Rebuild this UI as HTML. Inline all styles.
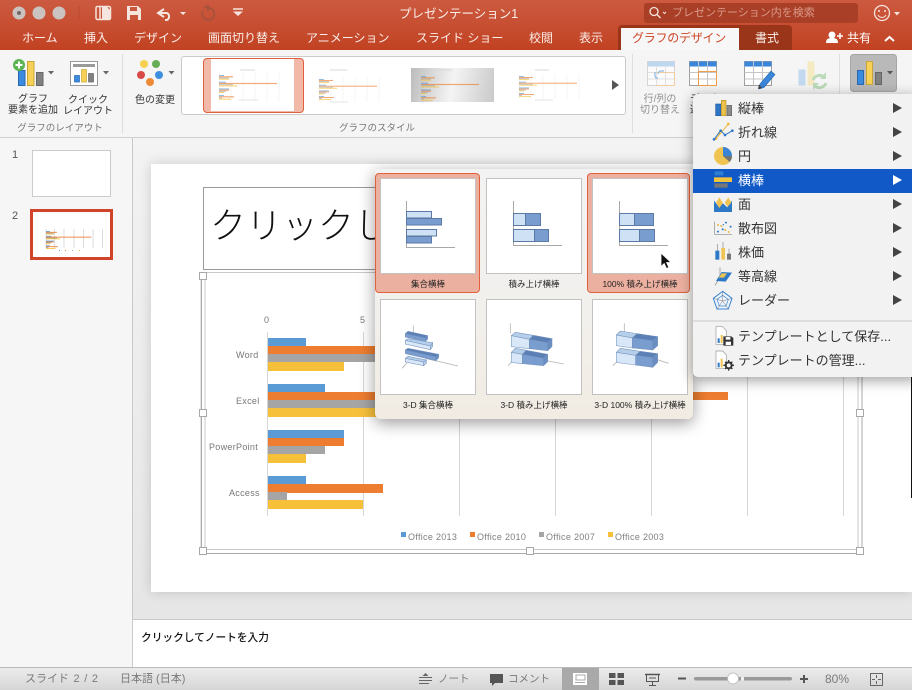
<!DOCTYPE html>
<html lang="ja"><head><meta charset="utf-8"><title>プレゼンテーション1</title>
<style>
html,body{margin:0;padding:0}
body{position:relative;width:912px;height:690px;overflow:hidden;background:#e6e6e6;font-family:"Liberation Sans","Noto Sans CJK JP",sans-serif;color:#333}
.a{position:absolute}
.t{position:absolute;white-space:nowrap;line-height:1}
.c{transform:translateX(-50%)}
.s{position:absolute;left:0;top:0;width:912px;height:690px;overflow:visible}
.tab{color:#fbeee9;font-size:12px;top:32px}
.rl{font-size:10px;color:#333}
.gl{font-size:9.5px;color:#777;top:124px}
.dim{font-size:10px;color:#8f8f8f}
.ax{font-size:9px;color:#777;letter-spacing:.3px}
.lg{font-size:9px;color:#808080;letter-spacing:.3px;top:533px}
.pl{font-size:8.5px;color:#222}
.m{font-size:13px;color:#333;left:738px}
.st{font-size:11px;color:#7a7a7a;top:674px}
</style></head><body>

<!-- title + tabs -->
<div class="a" style="left:0;top:0;width:912px;height:50px;background:linear-gradient(#cc5a40,#c64c2f 60%,#c14222)"></div>
<div class="a" style="left:0;top:50px;width:912px;height:87px;background:#f5f5f5;border-bottom:1px solid #cfcfcf"></div>
<div class="a" style="left:644px;top:3px;width:214px;height:20px;border-radius:3px;background:#a93f27"></div>
<div class="a" style="left:618px;top:25px;width:174px;height:25px;border-radius:4px 4px 0 0;background:#9a3519"></div>
<div class="a" style="left:621px;top:28px;width:118px;height:22px;background:#f7f7f7"></div>

<svg class="s" viewBox="0 0 912 690">
 <circle cx="19" cy="13" r="6.5" fill="#cbc3bf"/><circle cx="19" cy="13" r="2" fill="#6f6a68"/>
 <circle cx="39" cy="13" r="6.5" fill="#cbc3bf"/><circle cx="59" cy="13" r="6.5" fill="#cbc3bf"/>
 <path d="M79 6v14" stroke="#b9492e"/>
 <rect x="96" y="6.5" width="14.500" height="13" rx="1.500" fill="none" stroke="#f6e5df" stroke-width="1.500"/><path d="M100 7v12" stroke="#f6e5df" stroke-width="1.500"/><path d="M102 7h5l4 4v8h-9z" fill="#f6e5df"/>
 <path d="M127 6h11l3 3v11h-14z" fill="#f6e5df"/><rect x="130" y="7" width="7" height="4" fill="#c9553a"/><rect x="130" y="15" width="8" height="5" fill="#c9553a"/>
 <path d="M164 9l-6 4 6 4M158 13h9a4 4 0 0 1 0 7h-2" fill="none" stroke="#f6e5df" stroke-width="2"/>
 <path d="M180 12h6l-3 3z" fill="#f6e5df"/>
 <path d="M204 8l4-2v5M207 8a6 6 0 1 1-4 3" fill="none" stroke="#a8523c" stroke-width="2"/>
 <path d="M233 9h10" stroke="#f6e5df" stroke-width="1.500"/><path d="M233 11.500h10l-5 4.500z" fill="#f6e5df"/>
 <circle cx="654" cy="11.500" r="4" fill="none" stroke="#f6e5df" stroke-width="1.300"/><path d="M657 14.500l3.500 3.500" stroke="#f6e5df" stroke-width="1.300"/><path d="M663 12l1.500 1.500 1.500-1.500" fill="none" stroke="#f6e5df"/>
 <circle cx="882" cy="13" r="7.500" fill="none" stroke="#f6e5df" stroke-width="1.300"/><circle cx="879" cy="11" r="1" fill="#f6e5df"/><circle cx="885" cy="11" r="1" fill="#f6e5df"/><path d="M878 15a4.500 4.500 0 0 0 8 0" fill="none" stroke="#f6e5df"/>
 <path d="M894 12h6l-3 3.500z" fill="#f6e5df"/>
 <circle cx="832" cy="35" r="3.500" fill="#fff"/><path d="M826 43c0-4 2-5 6-5s6 1 6 5z" fill="#fff"/><path d="M840 33v6M837 36h6" stroke="#fff" stroke-width="1.500"/>
 <path d="M885 41l4.500-4 4.500 4" fill="none" stroke="#fff" stroke-width="2"/>

 <!-- ribbon separators -->
 <path d="M122.500 54v79M632.500 54v79M839.500 54v79" stroke="#dedede"/>

 <!-- add element -->
 <rect x="18.500" y="70.500" width="6.500" height="15" fill="#3a8ae0" stroke="#2a68ad"/>
 <rect x="27.500" y="61.500" width="6.500" height="24" fill="#f7d155" stroke="#caa63a"/>
 <rect x="36.500" y="72.500" width="6.500" height="13" fill="#808080" stroke="#666"/>
 <circle cx="19" cy="65" r="6" fill="#5db552"/><path d="M19 61.500v7M15.500 65h7" stroke="#fff" stroke-width="2"/>
 <path d="M48 71h6l-3 3.500z" fill="#666"/>
 <!-- quick layout -->
 <rect x="70.500" y="61.500" width="27" height="24" fill="#fff" stroke="#9a9a9a"/>
 <rect x="73" y="64" width="22" height="3" fill="#9a9a9a"/>
 <rect x="74.500" y="75.500" width="5" height="6.500" fill="#3a8ae0" stroke="#2a68ad" stroke-width=".7"/>
 <rect x="81.500" y="69.500" width="5" height="12.500" fill="#f7d155" stroke="#caa63a" stroke-width=".7"/>
 <rect x="88.500" y="73.500" width="5" height="8.500" fill="#808080" stroke="#666" stroke-width=".7"/>
 <path d="M103 71h6l-3 3.500z" fill="#666"/>
 <!-- colours -->
 <circle cx="144" cy="64" r="4" fill="#f7d04f"/><circle cx="156" cy="64" r="4" fill="#66ae55"/><circle cx="141" cy="75" r="4" fill="#d84a45"/><circle cx="159" cy="75" r="4" fill="#3f8ee0"/><circle cx="150" cy="82" r="4" fill="#ee8b36"/>
 <path d="M168.500 71h6l-3 3.500z" fill="#666"/>

 <!-- switch row/col -->
 <g opacity=".6">
 <rect x="647.500" y="61.500" width="27" height="24" fill="#fff" stroke="#c0c0c0"/><rect x="647.500" y="61.500" width="27" height="5" fill="#9cc3ec"/>
 <path d="M656.500 66v19M665.500 66v19M647.500 72.500h27M647.500 79h27" stroke="#d3d3d3"/>
 <path d="M656.500 72.500h18v13h-18" fill="none" stroke="#f0b16c"/>
 <path d="M655 72v4a2 2 0 0 0 2 2h1M664 71h-3a3 3 0 0 0-3 3" fill="none" stroke="#4f90d8" stroke-width="1.200"/>
 </g>
 <!-- table/data -->
 <rect x="689.500" y="61.500" width="27" height="24" fill="#fff" stroke="#a0a0a0"/><rect x="689.500" y="61.500" width="27" height="5" fill="#3a86d8"/>
 <path d="M698.500 61v24M707.500 61v24M689.500 72.500h27M689.500 79h27" stroke="#c5c5c5"/>
 <path d="M698.500 71.500h18v14h-18z" fill="none" stroke="#ef9d4a"/>
</svg>

<!-- Tab labels -->
<div class="t tab" style="left:22px">ホーム</div>
<div class="t tab" style="left:84px">挿入</div>
<div class="t tab" style="left:134px">デザイン</div>
<div class="t tab" style="left:208px">画面切り替え</div>
<div class="t tab" style="left:306px">アニメーション</div>
<div class="t tab" style="left:416px">スライド ショー</div>
<div class="t tab" style="left:529px">校閲</div>
<div class="t tab" style="left:579px">表示</div>
<div class="t tab" style="left:632px;color:#cf4526;letter-spacing:-.25px">グラフのデザイン</div>
<div class="t tab" style="left:755px">書式</div>
<div class="t tab" style="left:847px;color:#fff">共有</div>
<div class="t" style="left:399px;top:8px;font-size:12.500px;color:#fbeee9">プレゼンテーション1</div>
<div class="t" style="left:672px;top:8px;font-size:11px;color:#d99a88">プレゼンテーション内を検索</div>

<!-- Ribbon labels -->
<div class="t rl c" style="left:33px;top:95px">グラフ</div>
<div class="t rl c" style="left:33px;top:106px">要素を追加</div>
<div class="t rl c" style="left:88px;top:96px">クイック</div>
<div class="t rl c" style="left:88px;top:107px">レイアウト</div>
<div class="t rl c" style="left:155px;top:96px">色の変更</div>
<div class="t gl c" style="left:60px">グラフのレイアウト</div>
<div class="t gl c" style="left:377px">グラフのスタイル</div>
<div class="t dim c" style="left:660px;top:95px">行/列の</div>
<div class="t dim c" style="left:660px;top:106px">切り替え</div>
<div class="t rl" style="left:690px;top:95px">データの</div>
<div class="t rl" style="left:690px;top:106px">選択</div>

<!-- Gallery -->
<div class="a" style="left:181px;top:56px;width:443px;height:57px;background:#fff;border:1px solid #cacaca;border-radius:3px"></div>
<div class="a" style="left:203px;top:58px;width:99px;height:53px;background:#f2b8a8;border:1px solid #e0603c;border-radius:4px"></div>
<div class="a" style="left:211px;top:59px;width:83px;height:52px;background:#fff"></div>
<div class="a" style="left:411px;top:68px;width:83px;height:34px;background:linear-gradient(100deg,#bcbcbc,#f4f4f4 50%,#c9c9c9)"></div>

<svg class="s" viewBox="0 0 912 690">
 <defs>
  <g id="mini">
   <rect y="0" width="5" height="1.200" fill="#5b9bd5"/><rect y="1.200" width="14" height="1.200" fill="#ed7d31"/><rect y="2.400" width="10" height="1.200" fill="#a5a5a5"/><rect y="3.600" width="10" height="1.200" fill="#f6c03b"/>
   <rect y="6.700" width="7" height="1.200" fill="#5b9bd5"/><rect y="7.900" width="58" height="1.200" fill="#ed7d31"/><rect y="9.100" width="14" height="1.200" fill="#a5a5a5"/><rect y="10.300" width="18" height="1.200" fill="#f6c03b"/>
   <rect y="13.400" width="10" height="1.200" fill="#5b9bd5"/><rect y="14.600" width="10" height="1.200" fill="#ed7d31"/><rect y="15.800" width="7" height="1.200" fill="#a5a5a5"/><rect y="17" width="5" height="1.200" fill="#f6c03b"/>
   <rect y="20" width="5" height="1.200" fill="#5b9bd5"/><rect y="21.200" width="15" height="1.200" fill="#ed7d31"/><rect y="22.400" width="3" height="1.200" fill="#a5a5a5"/><rect y="23.600" width="12" height="1.200" fill="#f6c03b"/>
  </g>
  <path id="mg" d="M0 -2v29M12 -2v29M24 -2v29M36 -2v29M48 -2v29M60 -2v29" stroke="#efefef" stroke-width=".6" fill="none"/>
 </defs>
 <use href="#mg" transform="translate(219 75)"/><use href="#mg" transform="translate(319 79) scale(1 .85)"/><use href="#mg" transform="translate(519 76) scale(1 .85)"/>
 <g opacity=".65">
 <use href="#mini" transform="translate(219 75)"/>
 <use href="#mini" transform="translate(319 79) scale(1 .85)"/>
 <use href="#mini" transform="translate(421 76)"/>
 <use href="#mini" transform="translate(519 76) scale(1 .85)"/>
 </g>
 <path d="M240 70h15M330 70h17M438 70h14M535 70h14" stroke="#d8d8d8" stroke-width="1"/>
 <path d="M238 100h20M330 102h18M535 100h18" stroke="#e4e4e4" stroke-width="1"/>
 <path d="M612 80l7 5-7 5z" fill="#555"/>
 <!-- faded refresh -->
 <g opacity=".55">
  <rect x="798.500" y="69.500" width="7" height="16" fill="#9cc3ec"/><rect x="807.500" y="61.500" width="7" height="24" fill="#f5e09a"/>
  <path d="M813 80a7 7 0 0 1 11-3" fill="none" stroke="#8fc68a" stroke-width="3"/><path d="M826 72v7h-6z" fill="#8fc68a"/>
  <path d="M826 83a7 7 0 0 1-11 3" fill="none" stroke="#8fc68a" stroke-width="3"/><path d="M813 90v-7h6z" fill="#8fc68a"/>
 </g>
 <!-- pencil table -->
 <rect x="744.500" y="61.500" width="27" height="24" fill="#fff" stroke="#a0a0a0"/><rect x="744.500" y="61.500" width="27" height="5" fill="#3a86d8"/>
 <path d="M753.500 61v24M762.500 61v24M744.500 72.500h27M744.500 79h27" stroke="#c5c5c5"/>
 <path d="M760 84l11-13 4 3.500-11 13-5 1.500z" fill="#3a86d8" stroke="#2a68ad" stroke-width=".6"/><path d="M759 84.500l-1 4.500 4-1z" fill="#444"/>
 <!-- chart type button -->
 <rect x="850.500" y="54.500" width="46" height="37" rx="3" fill="#b9b9b9" stroke="#a5a5a5"/>
 <rect x="857.500" y="70.500" width="6" height="14" fill="#3a8ae0" stroke="#2a68ad"/>
 <rect x="866.500" y="61.500" width="6" height="23" fill="#f7d155" stroke="#caa63a"/>
 <rect x="875.500" y="72.500" width="6" height="12" fill="#808080" stroke="#666"/>
 <path d="M887 71h6l-3 3.500z" fill="#555"/>
</svg>

<!-- Left pane -->
<div class="a" style="left:0;top:138px;width:132px;height:529px;background:#f6f6f6;border-right:1px solid #c9c9c9"></div>
<div class="t" style="left:12px;top:150px;font-size:11px;color:#555;font-weight:500">1</div>
<div class="t" style="left:12px;top:211px;font-size:11px;color:#555;font-weight:500">2</div>
<div class="a" style="left:32px;top:150px;width:77px;height:45px;background:#fff;border:1px solid #cbcbcb"></div>
<div class="a" style="left:30px;top:209px;width:77px;height:45px;background:#fff;border:3px solid #d0452a"></div>
<svg class="s" viewBox="0 0 912 690">
 <path d="M46 229v19M54.500 229v19M64 229v19M74 229v19M83.500 229v19M93 229v19M102.500 229v19" stroke="#dcdcdc"/>
 <use href="#mini" transform="translate(46 231) scale(.78 .72)"/>
 <rect x="59" y="250" width="1" height="1" fill="#5b9bd5"/><rect x="65" y="250" width="1" height="1" fill="#ed7d31"/><rect x="72" y="250" width="1" height="1" fill="#a5a5a5"/><rect x="79" y="250" width="1" height="1" fill="#f6c03b"/>
</svg>

<!-- Main area -->
<div class="a" style="left:133px;top:138px;width:779px;height:481px;background:linear-gradient(#f3f3f3,#e6e6e6)"></div>
<div class="a" style="left:151px;top:164px;width:761px;height:428px;background:#fff;box-shadow:0 0 12px rgba(0,0,0,.16)"></div>
<div class="a" style="left:203px;top:187px;width:660px;height:83px;border:1px solid #9a9a9a;box-sizing:border-box"></div>
<div class="t" style="left:210px;top:208px;font-size:36px;color:#111;font-weight:300">クリックしてタイトルを入力</div>

<!-- Chart -->
<svg class="s" viewBox="0 0 912 690">
 <path d="M201 272.500v281h661M858 272.500v277h-653v-277" fill="none" stroke="#c9c9c9" stroke-width="1"/>
 <path d="M201.500 272v281M201 553.500h661M862 272v281" fill="none" stroke="#aaa"/>
 <path d="M205 272.500h653" stroke="#c9c9c9"/>
 <path d="M267.500 332v184M363.500 332v184M459.500 332v184M555.500 332v184M651.500 332v184M747.500 332v184M843.500 332v184" stroke="#d6d6d6"/>
 <g>
 <rect x="268" y="338" width="38" height="8" fill="#5b9bd5"/><rect x="268" y="346" width="125" height="8" fill="#ed7d31"/><rect x="268" y="354" width="125" height="8" fill="#a5a5a5"/><rect x="268" y="362" width="76" height="9" fill="#f6c03b"/>
 <rect x="268" y="384" width="57" height="8" fill="#5b9bd5"/><rect x="268" y="392" width="460" height="8" fill="#ed7d31"/><rect x="268" y="400" width="125" height="8" fill="#a5a5a5"/><rect x="268" y="408" width="125" height="9" fill="#f6c03b"/>
 <rect x="268" y="430" width="76" height="8" fill="#5b9bd5"/><rect x="268" y="438" width="76" height="8" fill="#ed7d31"/><rect x="268" y="446" width="57" height="8" fill="#a5a5a5"/><rect x="268" y="454" width="38" height="9" fill="#f6c03b"/>
 <rect x="268" y="476" width="38" height="8" fill="#5b9bd5"/><rect x="268" y="484" width="115" height="9" fill="#ed7d31"/><rect x="268" y="492" width="19" height="8" fill="#a5a5a5"/><rect x="268" y="500" width="95" height="9" fill="#f6c03b"/>
 </g>
 <rect x="401" y="532" width="5" height="5" fill="#5b9bd5"/><rect x="470" y="532" width="5" height="5" fill="#ed7d31"/><rect x="539" y="532" width="5" height="5" fill="#a5a5a5"/><rect x="608" y="532" width="5" height="5" fill="#f6c03b"/>
 <g fill="#fff" stroke="#a8a8a8">
  <rect x="199.500" y="272.500" width="7" height="7"/><rect x="199.500" y="409.500" width="7" height="7"/><rect x="199.500" y="547.500" width="7" height="7"/>
  <rect x="526.500" y="547.500" width="7" height="7"/><rect x="856.500" y="547.500" width="7" height="7"/><rect x="856.500" y="409.500" width="7" height="7"/>
 </g>
</svg>
<div class="t ax" style="left:264px;top:316px">0</div>
<div class="t ax" style="left:360px;top:316px">5</div>
<div class="t ax" style="left:236px;top:351px">Word</div>
<div class="t ax" style="left:236px;top:397px">Excel</div>
<div class="t ax" style="left:209px;top:443px">PowerPoint</div>
<div class="t ax" style="left:229px;top:489px">Access</div>
<div class="t lg" style="left:408px">Office 2013</div>
<div class="t lg" style="left:477px">Office 2010</div>
<div class="t lg" style="left:546px">Office 2007</div>
<div class="t lg" style="left:615px">Office 2003</div>
<div class="a" style="left:911px;top:376px;width:1px;height:122px;background:#111"></div>

<!-- Notes -->
<div class="a" style="left:133px;top:619px;width:779px;height:48px;background:#fff;border-top:1px solid #cacaca;box-sizing:border-box"></div>
<div class="t" style="left:141px;top:633px;font-size:10.700px;color:#111;font-weight:500">クリックしてノートを入力</div>

<!-- Status bar -->
<div class="a" style="left:0;top:667px;width:912px;height:23px;background:linear-gradient(#ececec,#d6d6d6);border-top:1px solid #b9b9b9;box-sizing:border-box"></div>
<div class="a" style="left:562px;top:668px;width:37px;height:22px;background:#a9a9a9"></div>
<div class="t st" style="left:25px;word-spacing:1.500px">スライド 2 / 2</div>
<div class="t st" style="left:120px">日本語 (日本)</div>
<div class="t st" style="left:438px;font-size:10.500px">ノート</div>
<div class="t st" style="left:508px;font-size:10.500px">コメント</div>
<div class="t st" style="left:825px;font-size:12px;top:673px">80%</div>
<svg class="s" viewBox="0 0 912 690">
 <path d="M425.500 673l-3 3h6z" fill="#666"/><path d="M419 677.500h13M419 680.500h13M419 683.500h10" stroke="#666"/>
 <path d="M490 674h13v9h-8l-3 3v-3h-2z" fill="#555"/>
 <rect x="573" y="673" width="14" height="12" fill="#fff"/><rect x="576" y="675" width="9" height="5" fill="none" stroke="#a9a9a9"/><path d="M575 682.500h10" stroke="#a9a9a9"/>
 <path d="M609 673h6.500v5h-6.500zM617.500 673h6.500v5h-6.500zM609 680h6.500v5h-6.500zM617.500 680h6.500v5h-6.500z" fill="#555"/>
 <path d="M645 674.500h15" stroke="#555" stroke-width="1.500"/><path d="M646.500 675v6.500h12v-6.500M652.500 681.500v4M649 685.500h7M649 678h7" fill="none" stroke="#555"/>
 <path d="M678 678.500h8" stroke="#555" stroke-width="2"/>
 <rect x="694" y="677" width="98" height="3.500" rx="1.700" fill="#9a9a9a"/><rect x="741" y="677" width="3" height="3.500" fill="#eee"/>
 <circle cx="733" cy="678.500" r="5.500" fill="#fff" stroke="#bbb" stroke-width=".8"/>
 <path d="M800 679h8M804 675v8" stroke="#555" stroke-width="2"/>
 <rect x="870.500" y="673.500" width="12" height="12" fill="none" stroke="#666"/><path d="M876.500 675v3M876.500 681v3M872 679.500h3M878 679.500h3" stroke="#666"/>
</svg>

<!-- Popup gallery -->
<div class="a" style="left:375px;top:169px;width:318px;height:250px;border-radius:0 0 6px 6px;background:linear-gradient(#f2f2f2,#f2f0ec 60%,#f1ebe2);box-shadow:0 4px 16px rgba(0,0,0,.4)"></div>
<div class="a" style="left:375px;top:173px;width:105px;height:120px;background:#ecb0a0;border:1px solid #e2603c;border-radius:4px;box-sizing:border-box"></div>
<div class="a" style="left:587px;top:173px;width:103px;height:120px;background:#ecb0a0;border:1px solid #e2603c;border-radius:4px;box-sizing:border-box"></div>
<div class="a th" style="left:380px;top:178px;width:96px;height:96px;background:#fff;border:1px solid #c2c2c2;box-sizing:border-box"></div>
<div class="a th" style="left:486px;top:178px;width:96px;height:96px;background:#fff;border:1px solid #c2c2c2;box-sizing:border-box"></div>
<div class="a th" style="left:592px;top:178px;width:96px;height:96px;background:#fff;border:1px solid #c2c2c2;box-sizing:border-box"></div>
<div class="a th" style="left:380px;top:299px;width:96px;height:96px;background:#fff;border:1px solid #c2c2c2;box-sizing:border-box"></div>
<div class="a th" style="left:486px;top:299px;width:96px;height:96px;background:#fff;border:1px solid #c2c2c2;box-sizing:border-box"></div>
<div class="a th" style="left:592px;top:299px;width:96px;height:96px;background:#fff;border:1px solid #c2c2c2;box-sizing:border-box"></div>
<div class="t pl c" style="left:428px;top:280px">集合横棒</div>
<div class="t pl c" style="left:534px;top:280px">積み上げ横棒</div>
<div class="t pl c" style="left:640px;top:280px">100% 積み上げ横棒</div>
<div class="t pl c" style="left:428px;top:401px">3-D 集合横棒</div>
<div class="t pl c" style="left:534px;top:401px">3-D 積み上げ横棒</div>
<div class="t pl c" style="left:640px;top:401px">3-D 100% 積み上げ横棒</div>

<svg class="s" viewBox="0 0 912 690">
 <!-- 2D icons -->
 <g fill="none" stroke="#a8a8a8"><path d="M406.500 201v46.500h48.500"/><path d="M513.500 201v44.500h48.500"/><path d="M619.500 201v44.500h48.500"/></g>
 <g stroke="#5d7aa6" stroke-width="1">
  <rect x="406.500" y="211.500" width="25" height="6.500" fill="#cfe1f5"/><rect x="406.500" y="218.500" width="35" height="6.500" fill="#7a9dd0"/>
  <rect x="406.500" y="229.500" width="30" height="6.500" fill="#cfe1f5"/><rect x="406.500" y="236.500" width="25" height="6.500" fill="#7a9dd0"/>
  <rect x="513.500" y="213.500" width="12" height="12" fill="#cfe1f5"/><rect x="525.500" y="213.500" width="15" height="12" fill="#7a9dd0"/>
  <rect x="513.500" y="229.500" width="21" height="12" fill="#cfe1f5"/><rect x="534.500" y="229.500" width="14" height="12" fill="#7a9dd0"/>
  <rect x="619.500" y="213.500" width="15" height="12" fill="#cfe1f5"/><rect x="634.500" y="213.500" width="19" height="12" fill="#7a9dd0"/>
  <rect x="619.500" y="229.500" width="20" height="12" fill="#cfe1f5"/><rect x="639.500" y="229.500" width="15" height="12" fill="#7a9dd0"/>
 </g>
 <path d="M661 253v13.500l3.200-3 2.300 5 2.400-1-2.300-5h4.400z" fill="#111" stroke="#fff" stroke-width=".8"/>

 <!-- 3D icons, drawn in 3x zoom coordinates -->
 <g transform="translate(372 295) scale(.33333)" stroke="#7190bd" stroke-width="1.600">
  <g stroke="#b5b5b5" stroke-width="2.500" fill="none">
   <path d="M124 92v24M160 190l98 23M90 220l14-15"/>
   <path d="M415 85v30M500 192l75 15M408 212l12-12"/>
   <path d="M757 85v28M842 190l48 15M722 212l13-12"/>
  </g>
  <!-- cell 1 -->
  <path d="M100 116l8-7 59 13-7 7z" fill="#5a80b5"/><path d="M100 116l60 13v10l-60-13z" fill="#7a9dd0"/><path d="M160 129l7-7v10l-7 7z" fill="#6a8ec2"/>
  <path d="M100 136l8-5 74 12-7 10z" fill="#b5cfea"/><path d="M100 136l75 17v11l-75-17z" fill="#d9e8f8"/><path d="M175 153l7-10v11l-7 10z" fill="#b5cfea"/>
  <path d="M100 165l8-5 92 18-8 8z" fill="#5a80b5"/><path d="M100 165l92 21v11l-92-21z" fill="#7a9dd0"/><path d="M192 186l8-8v10l-8 9z" fill="#6a8ec2"/>
  <path d="M100 190l8-6 55 11-8 6z" fill="#b5cfea"/><path d="M100 190l55 11v11l-55-11z" fill="#d9e8f8"/><path d="M155 201l8-6v10l-8 7z" fill="#b5cfea"/>
  <!-- cell 2 row 1 -->
  <path d="M418 122l12-10 54 9-12 12z" fill="#b5cfea"/><path d="M472 133l12-12 56 10-13 12z" fill="#5a80b5"/>
  <path d="M418 122l54 11v28l-54-6z" fill="#d9e8f8"/><path d="M472 133l55 10v24l-55-6z" fill="#7a9dd0"/><path d="M527 143l13-12v24l-13 12z" fill="#6a8ec2"/>
  <!-- cell 2 row 2 -->
  <path d="M418 172l12-12 33 6-12 12z" fill="#b5cfea"/><path d="M451 178l12-12 64 12-12 12z" fill="#5a80b5"/>
  <path d="M418 172l33 6v28l-33-4z" fill="#d9e8f8"/><path d="M451 178l64 12v22l-64-6z" fill="#7a9dd0"/><path d="M515 190l12-12v22l-12 12z" fill="#6a8ec2"/>
  <!-- cell 3 row 1 -->
  <path d="M733 120l12-12 50 8-14 13z" fill="#b5cfea"/><path d="M781 129l14-13 62 9-15 12z" fill="#5a80b5"/>
  <path d="M733 120l48 9v30l-48-7z" fill="#d9e8f8"/><path d="M781 129l61 8v28l-61-6z" fill="#7a9dd0"/><path d="M842 137l15-12v27l-15 13z" fill="#6a8ec2"/>
  <!-- cell 3 row 2 -->
  <path d="M733 172l12-12 60 9-14 12z" fill="#b5cfea"/><path d="M791 181l14-12 52 7-15 12z" fill="#5a80b5"/>
  <path d="M733 172l58 9v29l-58-8z" fill="#d9e8f8"/><path d="M791 181l51 7v29l-51-7z" fill="#7a9dd0"/><path d="M842 188l15-12v26l-15 15z" fill="#6a8ec2"/>
 </g>
</svg>

<!-- Menu -->
<div class="a" style="left:693px;top:94px;width:225px;height:283px;border-radius:5px 0 0 5px;background:#f2f2f2;box-shadow:0 3px 14px rgba(0,0,0,.4)"></div>
<div class="a" style="left:693px;top:169px;width:219px;height:24px;background:#1259c8"></div>
<div class="a" style="left:693px;top:320px;width:219px;height:2px;background:#dcdcdc"></div>
<div class="t m" style="top:102px">縦棒</div>
<div class="t m" style="top:126px">折れ線</div>
<div class="t m" style="top:150px">円</div>
<div class="t m" style="top:174px;color:#fff">横棒</div>
<div class="t m" style="top:198px">面</div>
<div class="t m" style="top:222px">散布図</div>
<div class="t m" style="top:246px">株価</div>
<div class="t m" style="top:270px">等高線</div>
<div class="t m" style="top:294px">レーダー</div>
<div class="t m" style="top:330px">テンプレートとして保存...</div>
<div class="t m" style="top:354px">テンプレートの管理...</div>
<svg class="s" viewBox="0 0 912 690">
 <g fill="#444">
  <path d="M893 103l9 5-9 5z"/><path d="M893 127l9 5-9 5z"/><path d="M893 151l9 5-9 5z"/><path d="M893 175l9 5-9 5z" fill="#fff"/><path d="M893 199l9 5-9 5z"/><path d="M893 223l9 5-9 5z"/><path d="M893 247l9 5-9 5z"/><path d="M893 271l9 5-9 5z"/><path d="M893 295l9 5-9 5z"/>
 </g>
 <g transform="translate(690 90) scale(.33333)">
  <!-- 縦棒 -->
  <rect x="77" y="42" width="16" height="35" fill="#2e75c5" stroke="#245c9c" stroke-width="2"/>
  <rect x="94" y="31" width="14" height="46" fill="#edc24a" stroke="#b79230" stroke-width="2"/>
  <rect x="111" y="46" width="14" height="31" fill="#8a8a8a" stroke="#666" stroke-width="2"/>
  <!-- 折れ線 -->
  <path d="M78 146l37-44" stroke="#edb93c" stroke-width="3" fill="none"/><circle cx="115" cy="102" r="4" fill="#edb93c"/><circle cx="88" cy="130" r="4" fill="#edb93c"/><circle cx="78" cy="146" r="4" fill="#edb93c"/>
  <path d="M72 148l20-26 13 13 22-13" stroke="#2e75c5" stroke-width="3" fill="none"/><circle cx="72" cy="148" r="4" fill="#2e75c5"/><circle cx="92" cy="122" r="4" fill="#2e75c5"/><circle cx="105" cy="135" r="4" fill="#2e75c5"/><circle cx="127" cy="122" r="4" fill="#2e75c5"/>
  <!-- 円 -->
  <circle cx="99" cy="198" r="27" fill="#efc451"/><path d="M99 198V171a27 27 0 0 1 27 27z" fill="#3a84d5"/><path d="M99 198h27a27 27 0 0 1-7 18z" fill="#737373"/>
  <!-- 横棒 -->
  <rect x="74" y="244" width="26" height="12" fill="#2f7fd0"/><rect x="72" y="262" width="54" height="14" fill="#f0c23c"/><rect x="73" y="280" width="40" height="13" fill="#777"/>
  <!-- 面 -->
  <path d="M72 332l14 18 13-10 13 12 14-20v34H72z" fill="#2e78c8"/><path d="M88 322l11 17-11 15-10-16zM115 322l9 16-11 12-9-12z" fill="#efc451"/>
  <!-- 散布図 -->
  <path d="M74 395v38h52" fill="none" stroke="#888" stroke-width="2"/>
  <g fill="#2e78c8"><circle cx="84" cy="425" r="3"/><circle cx="98" cy="418" r="3"/><circle cx="108" cy="398" r="3"/><circle cx="122" cy="410" r="3"/><circle cx="100" cy="404" r="2"/></g>
  <g fill="#edb93c"><circle cx="84" cy="405" r="3"/><circle cx="94" cy="408" r="3"/><circle cx="106" cy="420" r="3"/><circle cx="116" cy="426" r="3"/></g>
 </g>
 <g transform="translate(690 236) scale(.33333)">
  <!-- 株価 -->
  <path d="M82 24v20M99 18v20M117 38v16" stroke="#888" stroke-width="2"/>
  <rect x="76" y="44" width="12" height="27" fill="#2e78c8"/><rect x="94" y="36" width="11" height="35" fill="#efc451"/><rect x="111" y="53" width="12" height="18" fill="#777"/>
  <!-- 等高線 -->
  <path d="M90 94v24M75 148l15-24" stroke="#888" stroke-width="2" fill="none"/>
  <path d="M95 108l31 2-19 27-29-2z" fill="#2e78c8"/><path d="M95 112h16l-9 13H86z" fill="#efc451"/>
  <!-- レーダー -->
  <path d="M98 166l28 21-11 32H81L70 187z" fill="#eef4fb" stroke="#3a84d5" stroke-width="3"/>
  <path d="M98 178l17 12-7 20H88l-7-20z" fill="none" stroke="#3a84d5" stroke-width="2"/>
  <path d="M98 166v29M126 187l-28 8M115 219l-17-24M81 219l17-24M70 187l28 8" stroke="#777" stroke-width="1.500" fill="none"/>
  <!-- Save template -->
  <path d="M78 272h20l11 12v41H78z" fill="#fff" stroke="#999" stroke-width="2"/>
  <rect x="83" y="307" width="6" height="14" fill="#2e78c8"/><rect x="92" y="297" width="6" height="24" fill="#efc451"/>
  <path d="M100 301h24l6 5v23h-30z" fill="#333"/><rect x="107" y="303" width="14" height="8" fill="#fff"/><rect x="107" y="317" width="16" height="10" fill="#fff"/>
  <!-- Manage template -->
  <path d="M78 345h20l11 12v41H78z" fill="#fff" stroke="#999" stroke-width="2"/>
  <rect x="83" y="380" width="6" height="14" fill="#2e78c8"/><rect x="92" y="368" width="6" height="26" fill="#efc451"/>
  <circle cx="116" cy="388" r="9" fill="none" stroke="#333" stroke-width="6"/>
  <path d="M116 372v6M116 398v6M100 388h6M126 388h6M105 377l4 4M123 395l4 4M127 377l-4 4M109 395l-4 4" stroke="#333" stroke-width="4"/>
 </g>
</svg>
</body></html>
